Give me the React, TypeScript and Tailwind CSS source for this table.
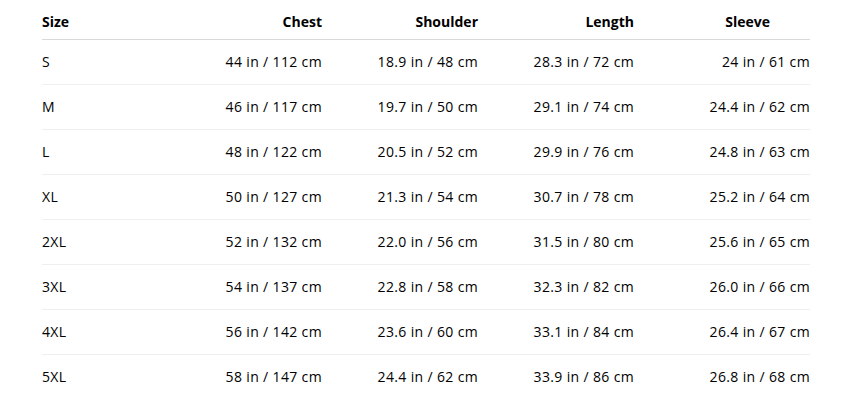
const rows = [
  { size: "S", chest: "44 in / 112 cm", shoulder: "18.9 in / 48 cm", length: "28.3 in / 72 cm", sleeve: "24 in / 61 cm" },
  { size: "M", chest: "46 in / 117 cm", shoulder: "19.7 in / 50 cm", length: "29.1 in / 74 cm", sleeve: "24.4 in / 62 cm" },
  { size: "L", chest: "48 in / 122 cm", shoulder: "20.5 in / 52 cm", length: "29.9 in / 76 cm", sleeve: "24.8 in / 63 cm" },
  { size: "XL", chest: "50 in / 127 cm", shoulder: "21.3 in / 54 cm", length: "30.7 in / 78 cm", sleeve: "25.2 in / 64 cm" },
  { size: "2XL", chest: "52 in / 132 cm", shoulder: "22.0 in / 56 cm", length: "31.5 in / 80 cm", sleeve: "25.6 in / 65 cm" },
  { size: "3XL", chest: "54 in / 137 cm", shoulder: "22.8 in / 58 cm", length: "32.3 in / 82 cm", sleeve: "26.0 in / 66 cm" },
  { size: "4XL", chest: "56 in / 142 cm", shoulder: "23.6 in / 60 cm", length: "33.1 in / 84 cm", sleeve: "26.4 in / 67 cm" },
  { size: "5XL", chest: "58 in / 147 cm", shoulder: "24.4 in / 62 cm", length: "33.9 in / 86 cm", sleeve: "26.8 in / 68 cm" },
];

const cols = "grid grid-cols-[144px_156px_156px_156px_156px]";

export default function App() {
  return (
    <div className="min-h-screen bg-white px-[42px] text-[14px] text-black [font-family:'Open_Sans',sans-serif]">
      <div className="w-[768px]">
        {/* header */}
        <div className={`${cols} h-[40px] items-center border-b border-[#d9d9d9] pt-[4px] font-bold`}>
          <div>Size</div>
          <div className="pr-5 text-right">Chest</div>
          <div className="pr-5 text-right">Shoulder</div>
          <div className="pr-5 text-right">Length</div>
          <div className="pr-10 text-right">Sleeve</div>
        </div>

        {rows.map((r, i) => (
          <div
            key={r.size}
            className={`${cols} h-[45px] items-center pb-[2px] tracking-[0.35px] ${i < rows.length - 1 ? "border-b border-[#efefef]" : ""}`}
          >
            <div>{r.size}</div>
            <div className="pr-5 text-right">{r.chest}</div>
            <div className="pr-5 text-right">{r.shoulder}</div>
            <div className="pr-5 text-right">{r.length}</div>
            <div className="text-right">{r.sleeve}</div>
          </div>
        ))}
      </div>
    </div>
  );
}
